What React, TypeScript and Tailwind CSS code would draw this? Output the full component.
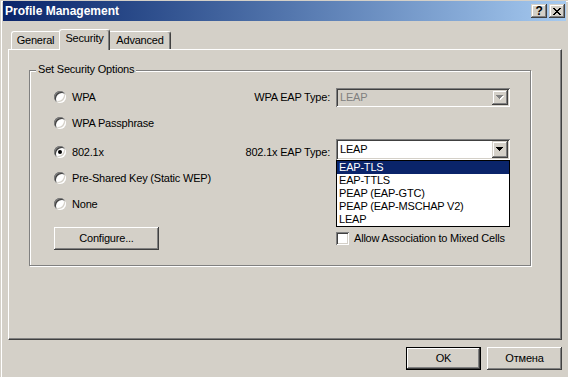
const raised =
  "shadow-[inset_-1px_-1px_#404040,inset_1px_1px_#fff,inset_-2px_-2px_#808080,inset_2px_2px_#d4d0c8]";
const raisedSmall =
  "shadow-[inset_-1px_-1px_#404040,inset_1px_1px_#d4d0c8,inset_-2px_-2px_#808080,inset_2px_2px_#fff]";
const sunken =
  "shadow-[inset_1px_1px_#808080,inset_-1px_-1px_#fff,inset_2px_2px_#404040,inset_-2px_-2px_#d4d0c8]";

function Arrow({ disabled }: { disabled?: boolean }) {
  return (
    <svg width="8" height="5" viewBox="0 0 8 5" shapeRendering="crispEdges">
      {disabled && (
        <g fill="#fff">
          <rect x="1" y="1" width="7" height="1" />
          <rect x="2" y="2" width="5" height="1" />
          <rect x="3" y="3" width="3" height="1" />
          <rect x="4" y="4" width="1" height="1" />
        </g>
      )}
      <g fill={disabled ? "#808080" : "#000"}>
        <rect x="0" y="0" width="7" height="1" />
        <rect x="1" y="1" width="5" height="1" />
        <rect x="2" y="2" width="3" height="1" />
        <rect x="3" y="3" width="1" height="1" />
      </g>
    </svg>
  );
}

function Radio({ label, checked }: { label: string; checked?: boolean }) {
  return (
    <div className="flex items-center">
      <span
        className={`flex h-[12px] w-[12px] items-center justify-center rounded-full bg-white ${sunken}`}
      >
        {checked && <span className="h-[4px] w-[4px] rounded-full bg-black" />}
      </span>
      <span className="ml-[6px] whitespace-nowrap">{label}</span>
    </div>
  );
}

function TitleButton({ children }: { children: React.ReactNode }) {
  return (
    <div
      className={`flex h-[14px] w-[16px] items-center justify-center bg-[#d4d0c8] ${raisedSmall}`}
    >
      {children}
    </div>
  );
}

const eapTypes = ["EAP-TLS", "EAP-TTLS", "PEAP (EAP-GTC)", "PEAP (EAP-MSCHAP V2)", "LEAP"];

export default function App() {
  return (
    <div className="flex h-[377px] w-[568px] flex-col overflow-hidden bg-[#d4d0c8] pl-[3px] pr-[2px] pt-[1px] font-['Liberation_Sans',Arial,sans-serif] text-[11px] leading-[13px] tracking-[-0.2px] text-black shadow-[inset_1px_1px_#d4d0c8,inset_2px_2px_#fff]">
      {/* Title bar */}
      <div className="flex h-[20px] items-center bg-linear-to-r from-[#0a246a] to-[#a6caf0] pl-[2px] pr-[1px]">
        <span className="flex-1 text-[12px] font-bold tracking-normal text-white">Profile Management</span>
        <div className="flex gap-[2px]">
          <TitleButton>
            <span className="text-[12px] font-bold leading-[12px]">?</span>
          </TitleButton>
          <TitleButton>
            <svg width="8" height="7" viewBox="0 0 8 7" shapeRendering="crispEdges">
              <path d="M0 0h2v1H0zM6 0h2v1H6zM1 1h2v1H1zM5 1h2v1H5zM2 2h4v1H2zM3 3h2v1H3zM2 4h4v1H2zM1 5h2v1H1zM5 5h2v1H5zM0 6h2v1H0zM6 6h2v1H6z" />
            </svg>
          </TitleButton>
        </div>
      </div>

      <div className="pl-[5px] pt-[8px]">
        {/* Tabs */}
        <div className="flex h-[20px] items-end pl-[3px]">
          <div className="flex h-[18px] w-[48px] items-center justify-center rounded-tl-[3px] border-l border-t border-white">
            General
          </div>
          <div className="relative z-10 -mb-[1px] flex h-[21px] w-[51px] items-center justify-center rounded-t-[3px] border-l border-r border-t border-white border-r-[#404040] bg-[#d4d0c8] pb-[3px] shadow-[inset_-1px_0_#808080]">
            Security
          </div>
          <div className="flex h-[18px] w-[61px] items-center justify-center rounded-tr-[3px] border-r border-t border-white border-r-[#404040] shadow-[inset_-1px_0_#808080]">
            Advanced
          </div>
        </div>

        {/* Tab panel */}
        <div className="h-[291px] w-[554px] border border-white border-b-[#404040] border-r-[#404040] pl-[20px] pt-[20px] shadow-[inset_-1px_-1px_#808080]">
          <div className="relative h-[196px] w-[502px] border border-[#808080] pl-[24px] pr-[20px] pt-[13px] shadow-[inset_1px_1px_#fff,1px_1px_#fff]">
            <span className="absolute left-[6px] top-[-8px] bg-[#d4d0c8] px-[2px]">
              Set Security Options
            </span>

            <div className="flex h-[26px] items-center">
              <div className="flex-1">
                <Radio label="WPA" />
              </div>
              <span className="mr-[6px]">WPA EAP Type:</span>
              <div className={`flex h-[19px] w-[174px] bg-[#d4d0c8] p-[2px] ${sunken}`}>
                <span className="flex flex-1 items-center pl-[2px] text-[#808080]">LEAP</span>
                <div className={`flex w-[16px] items-center justify-center bg-[#d4d0c8] ${raisedSmall}`}>
                  <Arrow disabled />
                </div>
              </div>
            </div>

            <div className="flex h-[26px] items-center">
              <Radio label="WPA Passphrase" />
            </div>

            <div className="mt-[3px] flex h-[26px] items-center">
              <div className="flex-1">
                <Radio label="802.1x" checked />
              </div>
              <span className="mr-[6px]">802.1x EAP Type:</span>
              <div className={`relative flex h-[21px] w-[174px] self-start bg-white p-[2px] ${sunken}`}>
                <span className="flex flex-1 items-center pl-[2px]">LEAP</span>
                <div className={`flex w-[16px] items-center justify-center bg-[#d4d0c8] ${raisedSmall}`}>
                  <Arrow />
                </div>
                <ul className="absolute left-0 top-full z-20 w-full border border-black bg-white">
                  {eapTypes.map((t, i) => (
                    <li
                      key={t}
                      className={`h-[13px] whitespace-nowrap px-[2px] ${
                        i === 0 ? "bg-[#0a246a] text-white" : ""
                      }`}
                    >
                      {t}
                    </li>
                  ))}
                </ul>
              </div>
            </div>

            <div className="flex h-[26px] items-center">
              <Radio label="Pre-Shared Key (Static WEP)" />
            </div>

            <div className="flex h-[26px] items-center">
              <Radio label="None" />
            </div>

            <div className="mt-[10px] flex h-[23px] items-center">
              <div className="flex-1">
                <button className={`h-[23px] w-[105px] bg-[#d4d0c8] ${raised}`}>Configure...</button>
              </div>
              <div className="flex w-[174px] items-center">
                <span className={`h-[13px] w-[13px] bg-white ${sunken}`} />
                <span className="ml-[5px] whitespace-nowrap">Allow Association to Mixed Cells</span>
              </div>
            </div>
          </div>
        </div>

        {/* Dialog buttons */}
        <div className="mt-[7px] flex w-[554px] justify-end gap-[6px]">
          <button className="h-[23px] w-[75px] border border-black bg-[#d4d0c8] shadow-[inset_-1px_-1px_#404040,inset_1px_1px_#fff,inset_-2px_-2px_#808080]">
            OK
          </button>
          <button className={`h-[23px] w-[75px] bg-[#d4d0c8] ${raised}`}>Отмена</button>
        </div>
      </div>
    </div>
  );
}
